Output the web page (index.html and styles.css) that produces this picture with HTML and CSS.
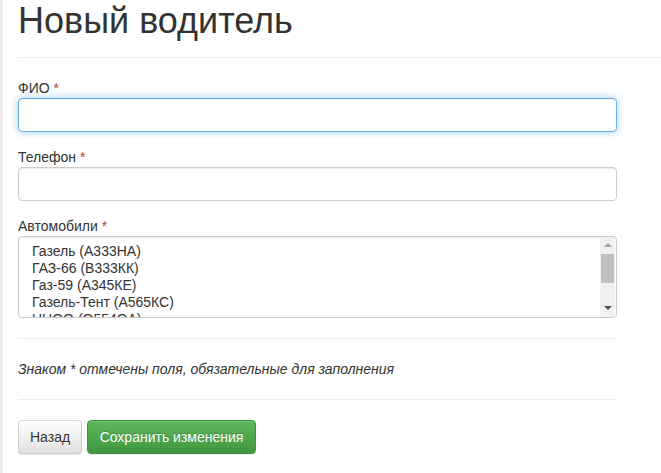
FILE: index.html
```html
<!doctype html>
<html>
	<head>
		<meta charset="utf-8"/>
		<title>Новый водитель</title>
		<link rel="stylesheet" href="styles.css">
	</head>
	<body>
		<div class="page">
			<h1 class="page-header">Новый водитель</h1>

			<!-- форма водителя -->
			<form class="driver-form">
				<div class="form-group">
					<label for="fio">ФИО <span class="req">*</span></label>
					<input type="text" id="fio" class="form-control focus">
				</div>
				<div class="form-group">
					<label for="phone">Телефон <span class="req">*</span></label>
					<input type="text" id="phone" class="form-control">
				</div>
				<div class="form-group last">
					<label>Автомобили <span class="req">*</span></label>
					<!-- список с прокруткой -->
					<div class="listbox">
						<ul class="options">
							<li>Газель (А333НА)</li>
							<li>ГАЗ-66 (В333КК)</li>
							<li>Газ-59 (А345КЕ)</li>
							<li>Газель-Тент (А565КС)</li>
							<li>ННОО (О554ОА)</li>
							<li>КамАЗ (Е123ММ)</li>
						</ul>
						<div class="scrollbar">
							<span class="arrow up"></span>
							<span class="track"><span class="thumb"></span></span>
							<span class="arrow down"></span>
						</div>
					</div>
				</div>

				<hr>
				<p class="note">Знаком * отмечены поля, обязательные для заполнения</p>
				<hr>

				<div class="buttons">
					<button type="button" class="btn btn-default">Назад</button>
					<button type="button" class="btn btn-success">Сохранить изменения</button>
				</div>
			</form>
		</div>
	</body>
</html>
```

FILE: styles.css
```css
html,body{height:100%;margin:0;padding:0;}
body{font-family:"Liberation Sans",Arial,sans-serif;font-size:14px;line-height:20px;color:#333;background:#fff;border-left:3px solid #eee;box-sizing:border-box;}
.page{padding-left:15px;}

/* заголовок */
.page-header{margin:1px 0 0;padding-bottom:16px;border-bottom:1px solid #eee;font-size:36px;font-weight:normal;line-height:39.6px;color:#333;}

/* форма */
.driver-form{width:599px;padding-top:20px;}
.form-group{margin-bottom:15px;}
.form-group.last{margin-bottom:0;}
.form-group label{display:block;font-weight:normal;}
.req{color:#a94442;}
.form-control{display:block;width:100%;height:34px;box-sizing:border-box;padding:6px 12px;font-family:inherit;font-size:14px;color:#555;background:#fff;border:1px solid #ccc;border-radius:4px;box-shadow:inset 0 1px 1px rgba(0,0,0,.075);}
.form-control.focus{border-color:#66afe9;outline:0;box-shadow:inset 0 1px 1px rgba(0,0,0,.075),0 0 8px rgba(102,175,233,.6);}

/* список автомобилей */
.listbox{display:flex;height:82px;box-sizing:border-box;border:1px solid #ccc;border-radius:4px;box-shadow:inset 0 1px 1px rgba(0,0,0,.075);overflow:hidden;}
.options{flex:1;margin:0;padding:6px 12px;list-style:none;line-height:17px;color:#333;overflow:hidden;}
.options li{padding:0 1px;white-space:nowrap;}
.scrollbar{display:flex;flex-direction:column;width:15px;margin-right:1px;background:#f1f1f1;}
.arrow{height:17px;position:relative;}
.arrow:after{content:"";position:absolute;left:4px;top:6px;border-left:4px solid transparent;border-right:4px solid transparent;}
.arrow.up:after{border-bottom:4px solid #a3a3a3;}
.arrow.down:after{border-top:4px solid #505050;}
.track{flex:1;}
.thumb{display:block;height:29px;margin:0 1px;background:#c1c1c1;}
hr{margin:20px 0;border:0;border-top:1px solid #eee;}
.note{margin:0;font-style:italic;}

/* кнопки */
.buttons{display:flex;gap:5px;}
.btn{height:34px;padding:6px 11px;font-family:inherit;font-size:14px;line-height:20px;border:1px solid transparent;border-radius:4px;box-shadow:inset 0 1px 0 rgba(255,255,255,.15),0 1px 1px rgba(0,0,0,.075);}
.btn-default{color:#333;text-shadow:0 1px 0 #fff;background:linear-gradient(to bottom,#fff 0,#e0e0e0 100%);border-color:#dbdbdb #ccc #ccc;}
.btn-success{padding:6px 11.5px;color:#fff;text-shadow:0 -1px 0 rgba(0,0,0,.2);background:linear-gradient(to bottom,#5cb85c 0,#419641 100%);border-color:#3e8f3e;}
```
